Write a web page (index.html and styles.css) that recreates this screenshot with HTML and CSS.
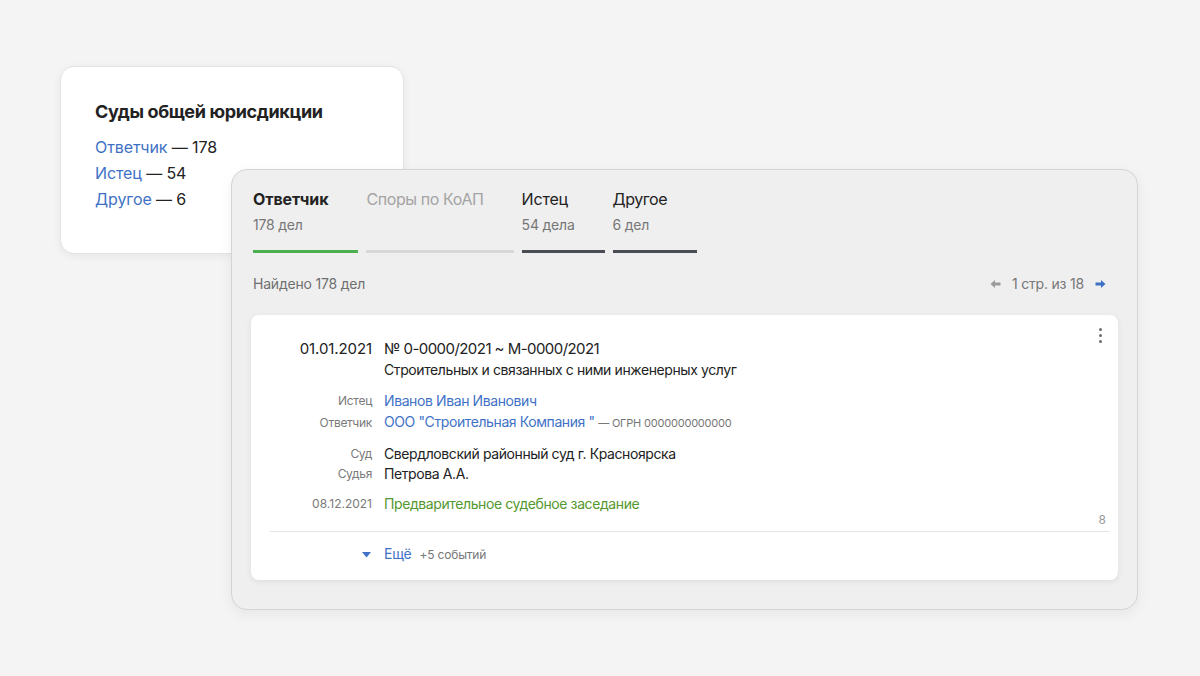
FILE: index.html
```html
<!DOCTYPE html>
<html lang="ru">
<head>
<meta charset="utf-8">
<title>Суды общей юрисдикции</title>
<link rel="stylesheet" href="styles.css">
</head>
<body>
<div class="stage">
  <section class="summary">
    <h2 class="summary-title">Суды общей юрисдикции</h2>
    <ul class="summary-list">
      <li><a class="link">Ответчик</a> — 178</li>
      <li><a class="link">Истец</a> — 54</li>
      <li><a class="link">Другое</a> — 6</li>
    </ul>
  </section>

  <section class="panel">
    <nav class="tabs">
      <div class="tab tab-active">
        <div class="tab-title">Ответчик</div>
        <div class="tab-sub">178 дел</div>
        <div class="tab-bar"></div>
      </div>
      <div class="tab tab-disabled">
        <div class="tab-title">Споры по КоАП</div>
        <div class="tab-sub"></div>
        <div class="tab-bar"></div>
      </div>
      <div class="tab">
        <div class="tab-title">Истец</div>
        <div class="tab-sub">54 дела</div>
        <div class="tab-bar"></div>
      </div>
      <div class="tab tab-last">
        <div class="tab-title">Другое</div>
        <div class="tab-sub">6 дел</div>
        <div class="tab-bar"></div>
      </div>
    </nav>

    <div class="toolbar">
      <span class="found">Найдено 178 дел</span>
      <div class="pager">
        <svg class="arrow arrow-prev" width="11" height="10" viewBox="0 0 11 10"><path d="M0.5 5 L5 1 V3.6 H10.5 V6.4 H5 V9 Z"/></svg>
        <span class="pager-text">1 стр. из 18</span>
        <svg class="arrow arrow-next" width="11" height="10" viewBox="0 0 11 10"><path d="M10.5 5 L6 1 V3.6 H0.5 V6.4 H6 V9 Z"/></svg>
      </div>
    </div>

    <article class="case">
      <div class="menu"><span></span><span></span><span></span></div>
      <div class="grid">
        <div class="k date">01.01.2021</div>
        <div class="v num">№ 0-0000/2021 ~ М-0000/2021</div>
        <div class="k"></div>
        <div class="v">Строительных и связанных с ними инженерных услуг</div>

        <div class="k lbl gap">Истец</div>
        <div class="v gap"><a class="link">Иванов Иван Иванович</a></div>
        <div class="k lbl">Ответчик</div>
        <div class="v"><a class="link">ООО "Строительная Компания "</a> <span class="ogrn">— ОГРН 0000000000000</span></div>

        <div class="k lbl gap-sm">Суд</div>
        <div class="v gap-sm">Свердловский районный суд г. Красноярска</div>
        <div class="k lbl tight">Судья</div>
        <div class="v tight">Петрова А.А.</div>

        <div class="k date-sm gap-sm">08.12.2021</div>
        <div class="v gap-sm green">Предварительное судебное заседание</div>
      </div>
      <div class="count">8</div>
      <div class="more">
        <svg class="tri" width="9" height="6" viewBox="0 0 9 6"><path d="M0 0 H9 L4.5 5.5 Z"/></svg>
        <a class="link">Ещё</a>
        <span class="events">+5 событий</span>
      </div>
    </article>
  </section>
</div>
</body>
</html>
```

FILE: styles.css
```css
* { box-sizing: border-box; }
html, body {
  margin: 0;
  padding: 0;
  background: #f4f4f4;
  font-family: Inter, "Noto Sans", "Liberation Sans", sans-serif;
  color: #222;
}
.stage {
  position: relative;
  width: 1200px;
  height: 676px;
  overflow: hidden;
}
.link { color: #3f72c6; text-decoration: none; }

.summary {
  position: absolute;
  left: 60px;
  top: 66px;
  width: 344px;
  height: 188px;
  background: #fff;
  border: 1px solid #e4e4e4;
  border-radius: 14px;
  box-shadow: 0 2px 8px rgba(0,0,0,0.06);
  padding: 33px 34px;
}
.summary-title {
  margin: 0 0 10px;
  font-size: 18px;
  line-height: 24px;
  font-weight: 700;
  color: #222;
  letter-spacing: -0.35px;
}
.summary-list {
  list-style: none;
  margin: 0;
  padding: 0;
  font-size: 16px;
  line-height: 26px;
  color: #222;
  letter-spacing: -0.1px;
}

.panel {
  position: absolute;
  left: 231px;
  top: 169px;
  width: 907px;
  height: 441px;
  background: #efefef;
  border: 1px solid #d4d4d4;
  border-radius: 16px;
  box-shadow: 0 4px 14px rgba(0,0,0,0.06);
  padding: 17px 19px 30px 19px;
}
.tabs {
  display: flex;
  gap: 8px;
  padding-left: 2px;
}
.tab {
  display: flex;
  flex-direction: column;
  padding-right: 30px;
  padding-bottom: 18px;
  position: relative;
}
.tab-title {
  font-size: 16px;
  line-height: 24px;
  color: #222;
  white-space: nowrap;
  letter-spacing: -0.2px;
}
.tab-active .tab-title { font-weight: 700; letter-spacing: -0.1px; }
.tab-disabled .tab-title { color: #a4a4a4; letter-spacing: -0.4px; }
.tab-last .tab-title { letter-spacing: -0.45px; }
.tab-sub {
  height: 20px;
  margin-top: 4px;
  font-size: 14px;
  line-height: 20px;
  color: #777;
  letter-spacing: -0.2px;
}
.tab-bar {
  position: absolute;
  left: 0;
  right: 0;
  bottom: 0;
  height: 3px;
  background: #4a4c53;
}
.tab-active .tab-bar { background: #4cb050; }
.tab-disabled .tab-bar { background: #d8d8d8; }

.toolbar {
  display: flex;
  justify-content: space-between;
  align-items: center;
  margin-top: 21px;
  height: 20px;
  padding-left: 2px;
}
.found { font-size: 14px; line-height: 20px; color: #6f6f6f; letter-spacing: -0.2px; }
.pager {
  display: flex;
  align-items: center;
  gap: 11px;
  padding-right: 12px;
}
.pager-text { font-size: 14px; color: #777; line-height: 20px; letter-spacing: -0.2px; }
.arrow-prev { fill: #9a9a9a; }
.arrow-next { fill: #3f72c6; }

.case {
  position: relative;
  margin-top: 21px;
  background: #fff;
  border-radius: 8px;
  box-shadow: 0 2px 6px rgba(0,0,0,0.07);
  padding: 24px 8px 0 19px;
  height: 265px;
}
.menu {
  position: absolute;
  right: 16px;
  top: 13px;
  display: flex;
  flex-direction: column;
  gap: 3px;
}
.menu span {
  width: 3px;
  height: 3px;
  border-radius: 50%;
  background: #6c6c6c;
}
.grid {
  display: grid;
  grid-template-columns: 102px 1fr;
  column-gap: 12px;
  align-items: center;
}
.k {
  text-align: right;
  font-size: 12px;
  line-height: 21px;
  color: #7a7a7a;
  letter-spacing: -0.3px;
}
.v {
  font-size: 14px;
  line-height: 21px;
  color: #222;
  letter-spacing: -0.4px;
}
.k.date, .v.num { line-height: 20px; }
.tight { line-height: 20px; }
.gap { margin-top: 10px; }
.gap-sm { margin-top: 9px; }
.k.date { font-size: 15px; color: #222; letter-spacing: -0.1px; }
.v.num { font-size: 15px; letter-spacing: -0.55px; }
.k.date-sm { font-size: 12px; color: #7a7a7a; letter-spacing: 0; }
.green { color: #54982f; }
.ogrn { font-size: 11px; color: #777; letter-spacing: -0.2px; }

.count {
  text-align: right;
  font-size: 12px;
  line-height: 16px;
  color: #999;
  padding-right: 4px;
  margin-top: -2px;
  margin-bottom: 3px;
}
.more {
  border-top: 1px solid #e6e6e6;
  padding-top: 12px;
  display: flex;
  align-items: baseline;
  padding-left: 92px;
  font-size: 14px;
  line-height: 20px;
  letter-spacing: -0.2px;
}
.tri { fill: #3f72c6; margin-right: 13px; position: relative; top: -1px; }
.events { font-size: 12px; color: #777; margin-left: 8px; letter-spacing: -0.2px; }
```
